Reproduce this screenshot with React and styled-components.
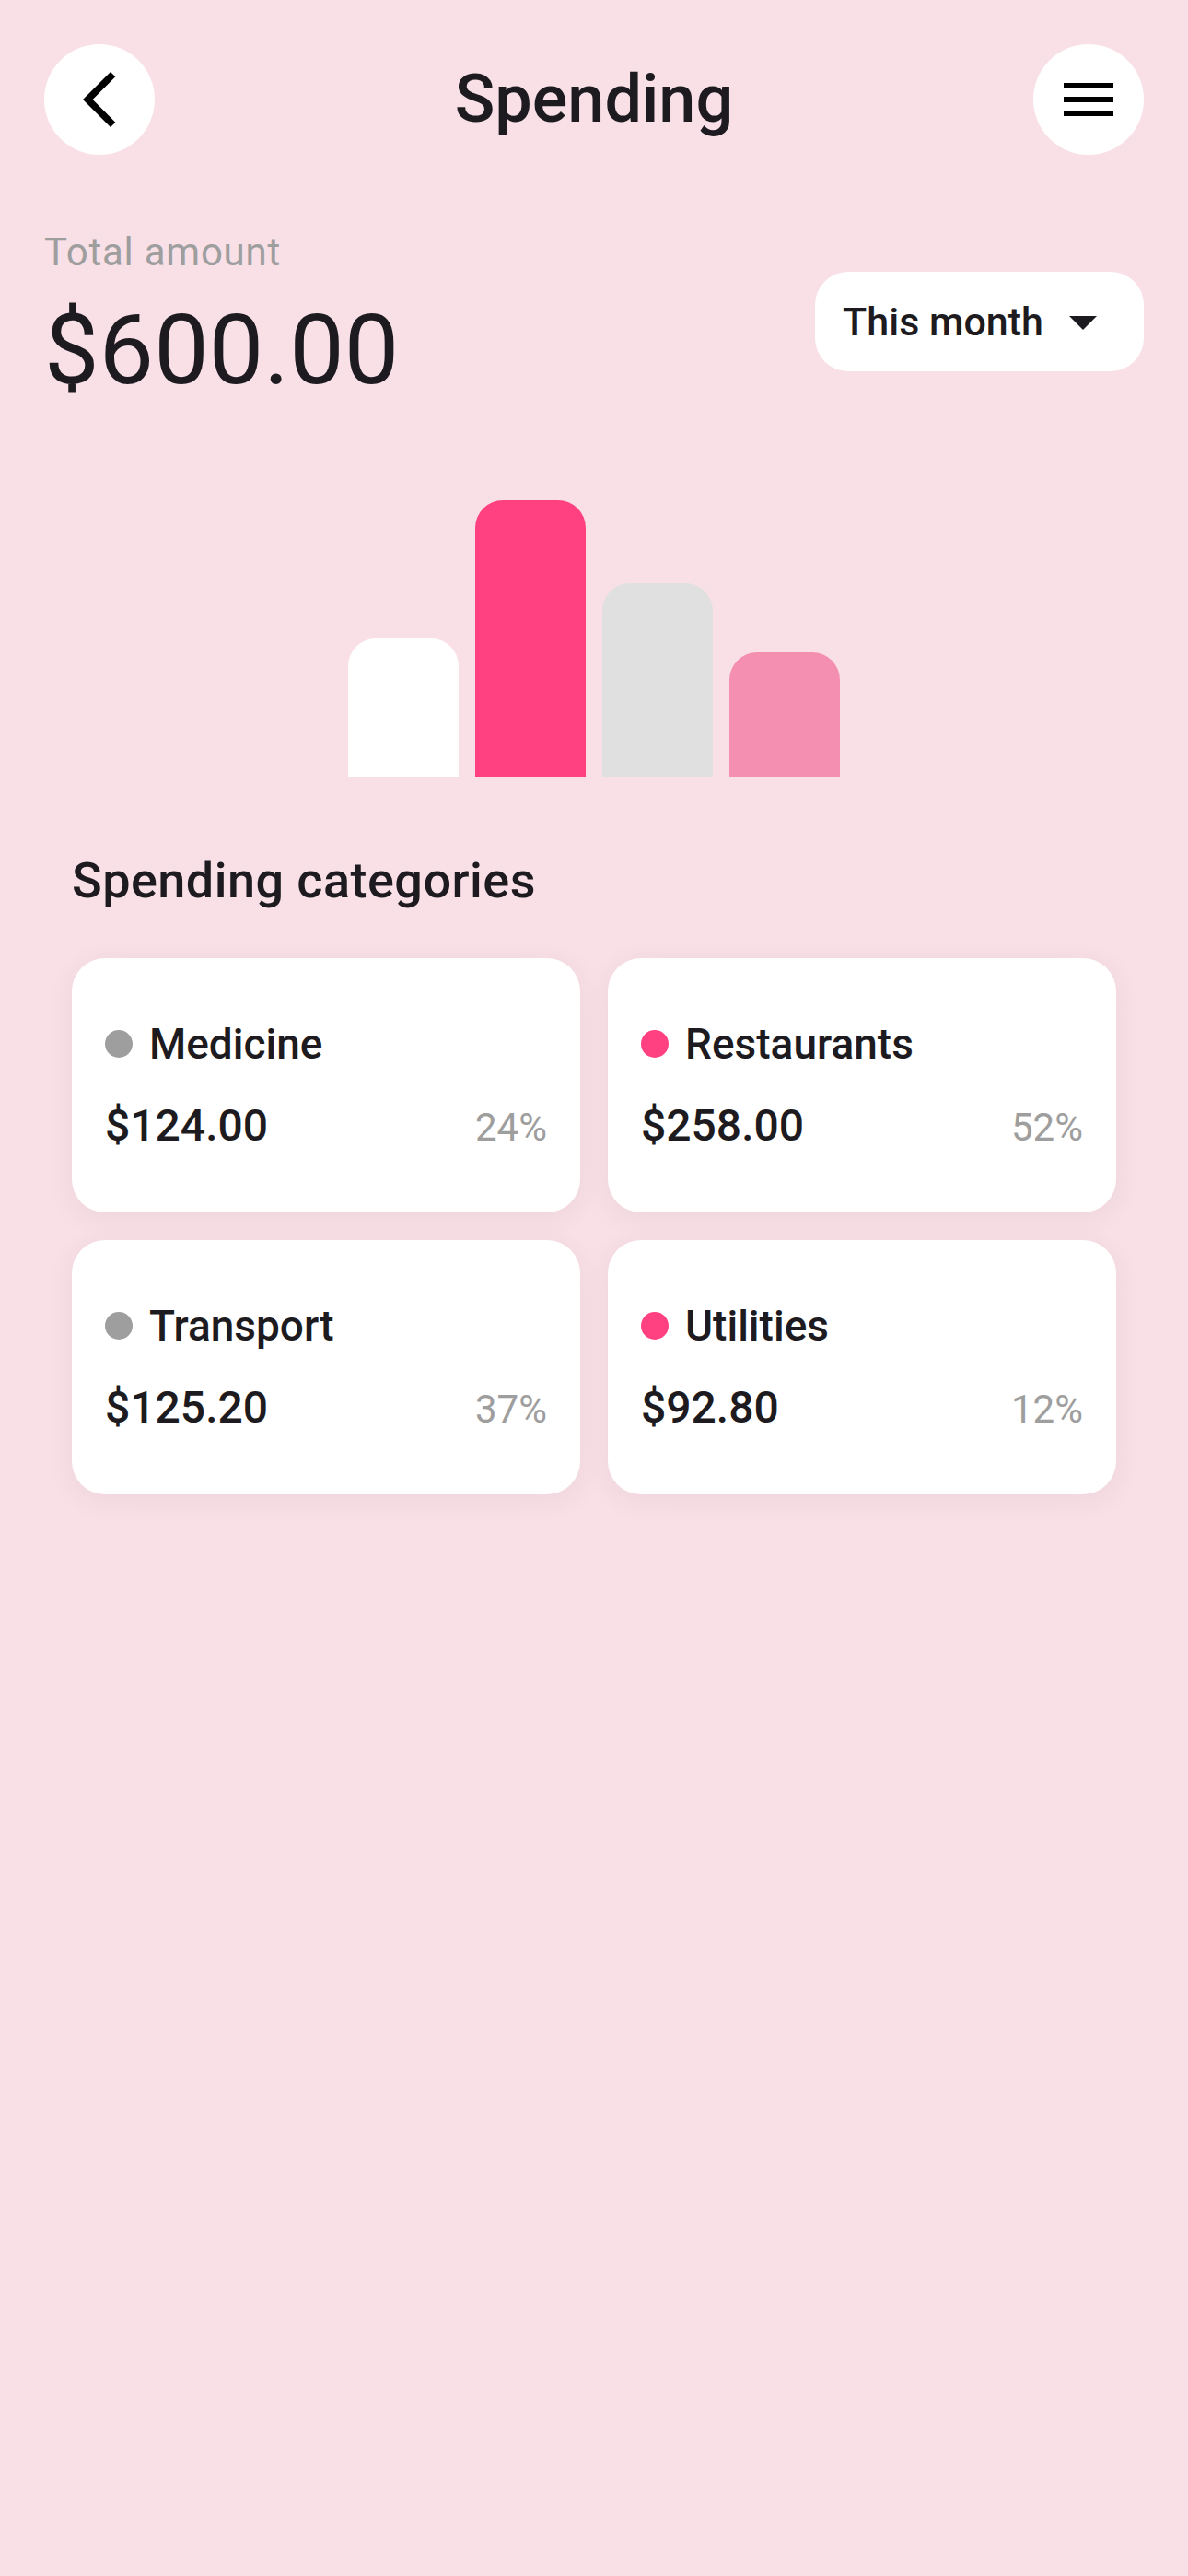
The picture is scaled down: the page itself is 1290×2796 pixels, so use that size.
import React from "react";
import styled, { createGlobalStyle } from "styled-components";

const GlobalStyle = createGlobalStyle`
  html, body {
    margin: 0;
    padding: 0;
    background: #F8E0E6;
  }
  body {
    font-family: Roboto, "Noto Sans", "Liberation Sans", sans-serif;
    color: #1D1B20;
  }
  * { box-sizing: border-box; }
`;

const Page = styled.div`
  min-height: 2796px;
  padding: 48px 48px;
  background: #F8E0E6;
`;

const Header = styled.header`
  display: flex;
  align-items: center;
  justify-content: space-between;
  height: 120px;
`;

const RoundButton = styled.button`
  width: 120px;
  height: 120px;
  border-radius: 50%;
  border: none;
  background: #ffffff;
  display: flex;
  align-items: center;
  justify-content: center;
  padding: 0;
  cursor: pointer;
  flex-shrink: 0;
`;

const Title = styled.h1`
  flex: 1;
  margin: 0;
  text-align: center;
  font-size: 72px;
  line-height: 84px;
  font-weight: 500;
  color: #1D1B20;
`;

const SummaryRow = styled.section`
  margin-top: 81px;
  display: flex;
  align-items: center;
  justify-content: space-between;
`;

const SummaryText = styled.div`
  display: flex;
  flex-direction: column;
  gap: 18px;
`;

const Label = styled.div`
  font-size: 42px;
  line-height: 50px;
  letter-spacing: 0.75px;
  color: #9E9E9E;
`;

const Total = styled.div`
  font-size: 106px;
  line-height: 126px;
  font-weight: 400;
  color: #1D1B20;
`;

const Dropdown = styled.button`
  height: 108px;
  border: none;
  border-radius: 36px;
  background: #ffffff;
  display: flex;
  align-items: center;
  gap: 7px;
  padding: 0 30px 0 30px;
  margin-top: 5px;
  font-family: Roboto, "Noto Sans", "Liberation Sans", sans-serif;
  font-size: 43px;
  font-weight: 500;
  color: #1D1B20;
  cursor: pointer;
`;

const Chart = styled.div`
  margin-top: 100px;
  height: 300px;
  display: flex;
  align-items: flex-end;
  justify-content: center;
  gap: 18px;
`;

const Bar = styled.div`
  width: 120px;
  border-radius: 30px 30px 0 0;
  background: ${(p) => p.$color};
`;

const Section = styled.section`
  margin-top: 81px;
  padding: 0 30px;
`;

const SectionTitle = styled.h2`
  margin: 0;
  font-size: 54px;
  line-height: 64px;
  font-weight: 500;
  letter-spacing: 0.45px;
  color: #1D1B20;
`;

const Grid = styled.div`
  margin-top: 52px;
  display: grid;
  grid-template-columns: 1fr 1fr;
  gap: 30px;
`;

const Card = styled.div`
  height: 276px;
  background: #ffffff;
  border-radius: 36px;
  padding: 65px 36px 0;
  display: flex;
  flex-direction: column;
  gap: 33px;
  box-shadow: 0 6px 30px rgba(120, 60, 80, 0.07);
`;

const CardHead = styled.div`
  display: flex;
  align-items: center;
  gap: 18px;
  height: 56px;
`;

const Dot = styled.span`
  width: 30px;
  height: 30px;
  border-radius: 50%;
  background: ${(p) => p.$color};
  flex-shrink: 0;
`;

const CardName = styled.span`
  font-size: 46px;
  line-height: 56px;
  font-weight: 500;
  color: #1D1B20;
`;

const CardRow = styled.div`
  display: flex;
  align-items: baseline;
  justify-content: space-between;
`;

const Amount = styled.span`
  font-size: 48px;
  line-height: 56px;
  font-weight: 500;
  color: #1D1B20;
`;

const Percent = styled.span`
  font-size: 42px;
  line-height: 50px;
  color: #9E9E9E;
`;

const BackIcon = () => (
  <svg width="72" height="72" viewBox="0 0 24 24" fill="#000">
    <path d="M17.77 3.77 16 2 6 12l10 10 1.77-1.77L9.54 12z" />
  </svg>
);

const MenuIcon = () => (
  <svg width="72" height="72" viewBox="0 0 24 24" fill="#000">
    <path d="M3 18h18v-2H3v2zm0-5h18v-2H3v2zm0-7v2h18V6H3z" />
  </svg>
);

const DropIcon = () => (
  <svg width="72" height="72" viewBox="0 0 24 24" fill="#1D1B20">
    <path d="M7 10l5 5 5-5z" />
  </svg>
);

const bars = [
  { h: 150, c: "#FFFFFF" },
  { h: 300, c: "#FF4081" },
  { h: 210, c: "#E0E0E0" },
  { h: 135, c: "#F48FB1" },
];

const categories = [
  { name: "Medicine", amount: "$124.00", pct: "24%", color: "#9E9E9E" },
  { name: "Restaurants", amount: "$258.00", pct: "52%", color: "#FF4081" },
  { name: "Transport", amount: "$125.20", pct: "37%", color: "#9E9E9E" },
  { name: "Utilities", amount: "$92.80", pct: "12%", color: "#FF4081" },
];

export default function App() {
  return (
    <>
      <GlobalStyle />
      <Page>
        <Header>
          <RoundButton aria-label="Back">
            <BackIcon />
          </RoundButton>
          <Title>Spending</Title>
          <RoundButton aria-label="Menu">
            <MenuIcon />
          </RoundButton>
        </Header>

        <SummaryRow>
          <SummaryText>
            <Label>Total amount</Label>
            <Total>$600.00</Total>
          </SummaryText>
          <Dropdown>
            This month
            <DropIcon />
          </Dropdown>
        </SummaryRow>

        <Chart>
          {bars.map((b, i) => (
            <Bar key={i} $color={b.c} style={{ height: b.h }} />
          ))}
        </Chart>

        <Section>
          <SectionTitle>Spending categories</SectionTitle>
          <Grid>
            {categories.map((c) => (
              <Card key={c.name}>
                <CardHead>
                  <Dot $color={c.color} />
                  <CardName>{c.name}</CardName>
                </CardHead>
                <CardRow>
                  <Amount>{c.amount}</Amount>
                  <Percent>{c.pct}</Percent>
                </CardRow>
              </Card>
            ))}
          </Grid>
        </Section>
      </Page>
    </>
  );
}
